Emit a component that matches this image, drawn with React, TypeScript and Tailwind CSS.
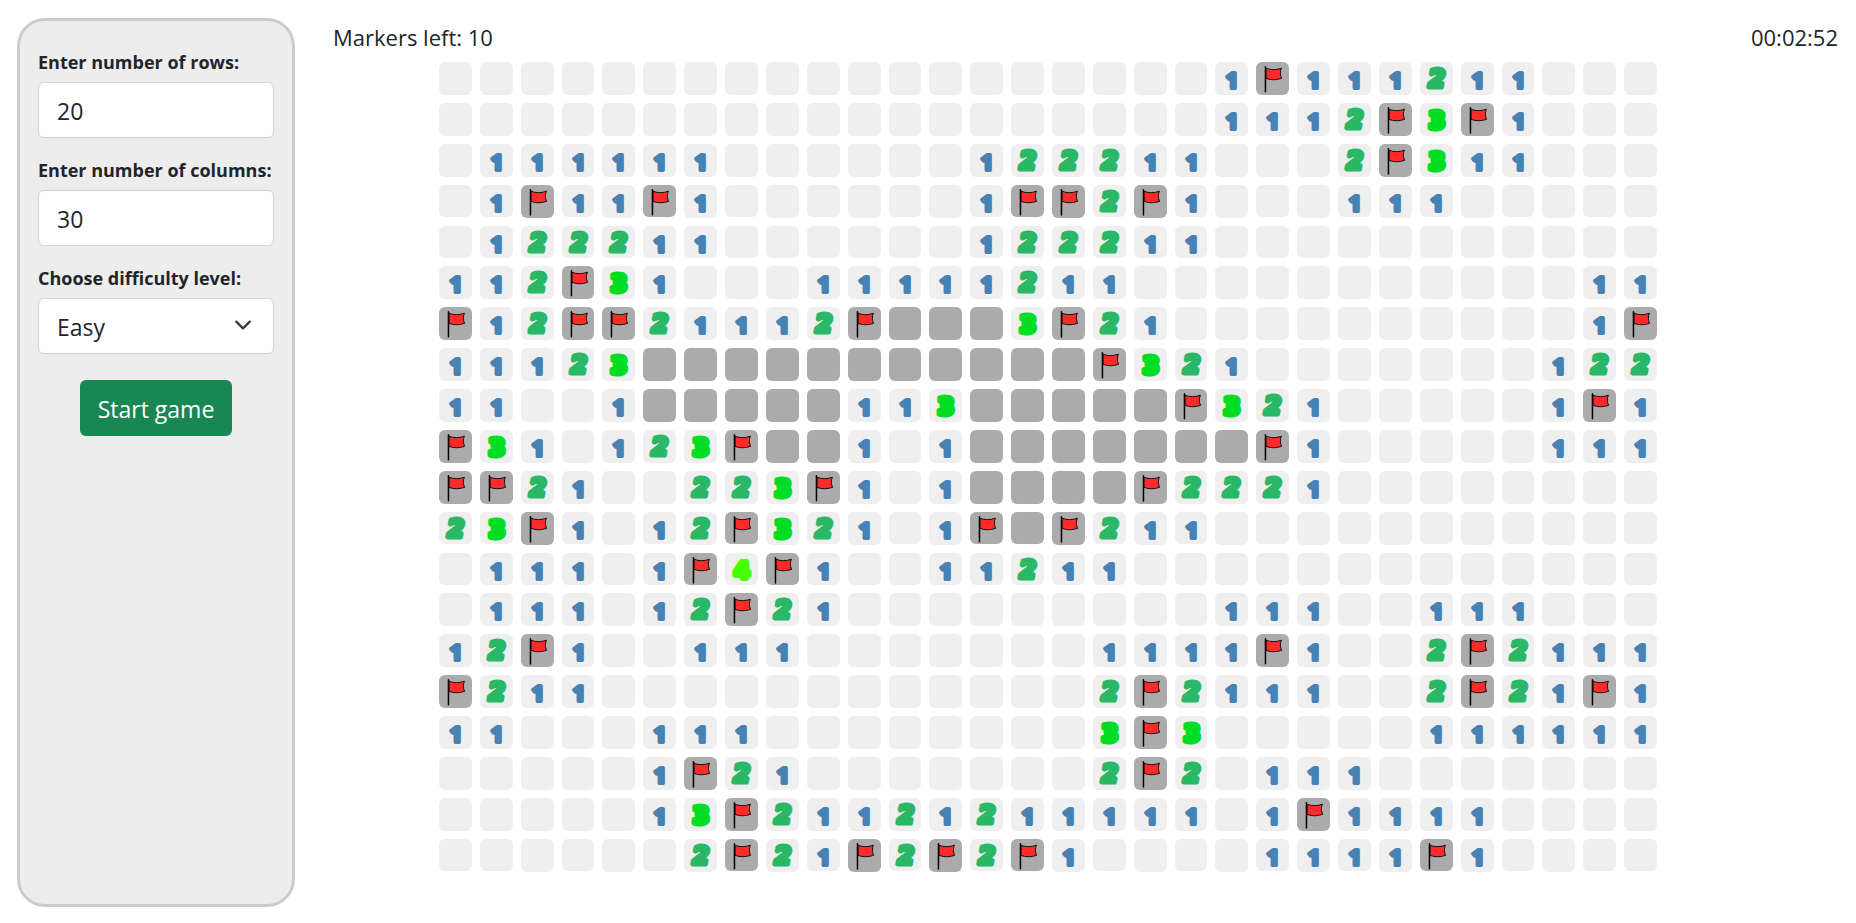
import { useState } from "react";

const BOARD = [
  "...................1F111211...",
  "...................1112F3F1...",
  ".111111......122211...2F311...",
  ".1F11F1......1FF2F1...111.....",
  ".122211......122211...........",
  "112F31...11111211...........11",
  "F12FF21112F###3F21..........1F",
  "11123###########F321.......122",
  "11..1#####113#####F321.....1F1",
  "F31.123F##1.1#######F1.....111",
  "FF21..223F1.1####F2221........",
  "23F1.12F321.1F#F211...........",
  ".111.1F4F1..11211.............",
  ".111.12F21.........111..111...",
  "12F1..111.......1111F1..2F2111",
  "F211............2F2111..2F21F1",
  "11...111........3F3.....111111",
  ".....1F21.......2F2.111.......",
  ".....13F21121211111.1F1111....",
  "......2F21F2F2F1....1111F1....",
];

type DigitStyle = { className: string; size: number; stroke: number; x: number; y: number };

const DIGITS: Record<string, DigitStyle> = {
  "1": {
    className: "fill-[#4682b4] stroke-[#4682b4] font-['Open_Sans',sans-serif] font-bold",
    size: 22,
    stroke: 4,
    x: 17,
    y: 26,
  },
  "2": {
    className: "fill-[#2ab867] stroke-[#2ab867] font-['DejaVu_Sans',sans-serif] font-bold italic",
    size: 24,
    stroke: 5,
    x: 17,
    y: 25,
  },
  "3": {
    className: "fill-[#00dd22] stroke-[#00dd22] font-['DejaVu_Sans',sans-serif] font-bold",
    size: 25,
    stroke: 5,
    x: 17,
    y: 26,
  },
  "4": {
    className: "fill-[#48ff00] stroke-[#48ff00] font-['DejaVu_Sans',sans-serif] font-bold",
    size: 22,
    stroke: 6,
    x: 17,
    y: 25,
  },
};

function Digit({ value }: { value: string }) {
  const { className, size, stroke, x, y } = DIGITS[value];
  return (
    <svg viewBox="0 0 33 33" className="size-full">
      <text
        x={x}
        y={y}
        textAnchor="middle"
        fontSize={size}
        strokeWidth={stroke}
        strokeLinejoin="round"
        className={className}
      >
        {value}
      </text>
    </svg>
  );
}

function Flag() {
  return (
    <svg viewBox="0 0 33 33" className="size-full" aria-hidden="true">
      <path
        d="M10 6.2C14.5 8.2 20.5 8.2 25.5 6.2C24.1 9.4 24.1 13 25.7 16.4C20.5 18.3 14.5 18.3 10 16.4Z"
        fill="#ff2a2a"
        stroke="#000"
        strokeWidth="0.9"
        strokeLinejoin="round"
      />
      <path d="M9.5 4.8V30" stroke="#000" strokeWidth="1.5" strokeLinecap="round" />
    </svg>
  );
}

function Cell({ value, label }: { value: string; label: string }) {
  const covered = value === "F" || value === "#";
  return (
    <button
      type="button"
      aria-label={label}
      className={`block aspect-square min-w-0 rounded-md ${covered ? "bg-[#ababab]" : "bg-[#efefef]"}`}
    >
      {value === "F" && <Flag />}
      {value in DIGITS && <Digit value={value} />}
    </button>
  );
}

const labelClass = "block text-[18px] leading-7 font-bold whitespace-nowrap";
const fieldClass =
  "block h-14 w-full rounded-md border border-[#ced4da] bg-white pt-0.5 pl-[18px] text-[23px] text-[#212529]";

export default function App() {
  const [rows, setRows] = useState("20");
  const [columns, setColumns] = useState("30");
  const [level, setLevel] = useState("Easy");

  return (
    <div className="flex min-h-screen items-stretch bg-white font-['Open_Sans','Noto_Sans',sans-serif] text-[#212529]">
      <aside className="mt-[18px] mb-4 ml-[17px] w-[278px] shrink-0 rounded-[28px] border-[3px] border-[#cbcbcb] bg-[#ededed] px-[18px] pt-[27px]">
        <form className="flex flex-col gap-[18px]" onSubmit={(e) => e.preventDefault()}>
          <div className="flex flex-col gap-1.5">
            <label htmlFor="rows" className={labelClass}>
              Enter number of rows:
            </label>
            <input id="rows" className={fieldClass} value={rows} onChange={(e) => setRows(e.target.value)} />
          </div>
          <div className="flex flex-col gap-1.5">
            <label htmlFor="columns" className={labelClass}>
              Enter number of columns:
            </label>
            <input id="columns" className={fieldClass} value={columns} onChange={(e) => setColumns(e.target.value)} />
          </div>
          <div className="flex flex-col gap-1.5">
            <label htmlFor="level" className={labelClass}>
              Choose difficulty level:
            </label>
            <div className="relative">
              <select
                id="level"
                className={`${fieldClass} appearance-none`}
                value={level}
                onChange={(e) => setLevel(e.target.value)}
              >
                <option>Easy</option>
              </select>
              <svg
                viewBox="0 0 16 16"
                className="pointer-events-none absolute top-[18px] right-[22px] size-[18px]"
                fill="none"
                stroke="#343a40"
                strokeWidth="2"
                strokeLinecap="round"
                strokeLinejoin="round"
                aria-hidden="true"
              >
                <path d="m2 5 6 6 6-6" />
              </svg>
            </div>
          </div>
          <button
            type="submit"
            className="mt-2 h-14 self-center rounded-md bg-[#198754] px-[18px] pt-0.5 text-[23px] whitespace-nowrap text-white"
          >
            Start game
          </button>
        </form>
      </aside>

      <main className="flex min-w-0 grow flex-col pt-[18px] pr-[18px] pl-[38px]">
        <header className="flex items-center justify-between text-[22px] leading-[38px]">
          <span>Markers left: 10</span>
          <span>00:02:52</span>
        </header>
        <div className="mt-1.5 mr-[75px] flex justify-center">
          <div className="grid w-full max-w-[1218px] grid-cols-[repeat(30,minmax(0,1fr))] gap-2">
            {BOARD.flatMap((row, r) =>
              [...row].map((value, c) => (
                <Cell key={`${r}-${c}`} value={value} label={`Row ${r + 1}, column ${c + 1}`} />
              )),
            )}
          </div>
        </div>
      </main>
    </div>
  );
}
